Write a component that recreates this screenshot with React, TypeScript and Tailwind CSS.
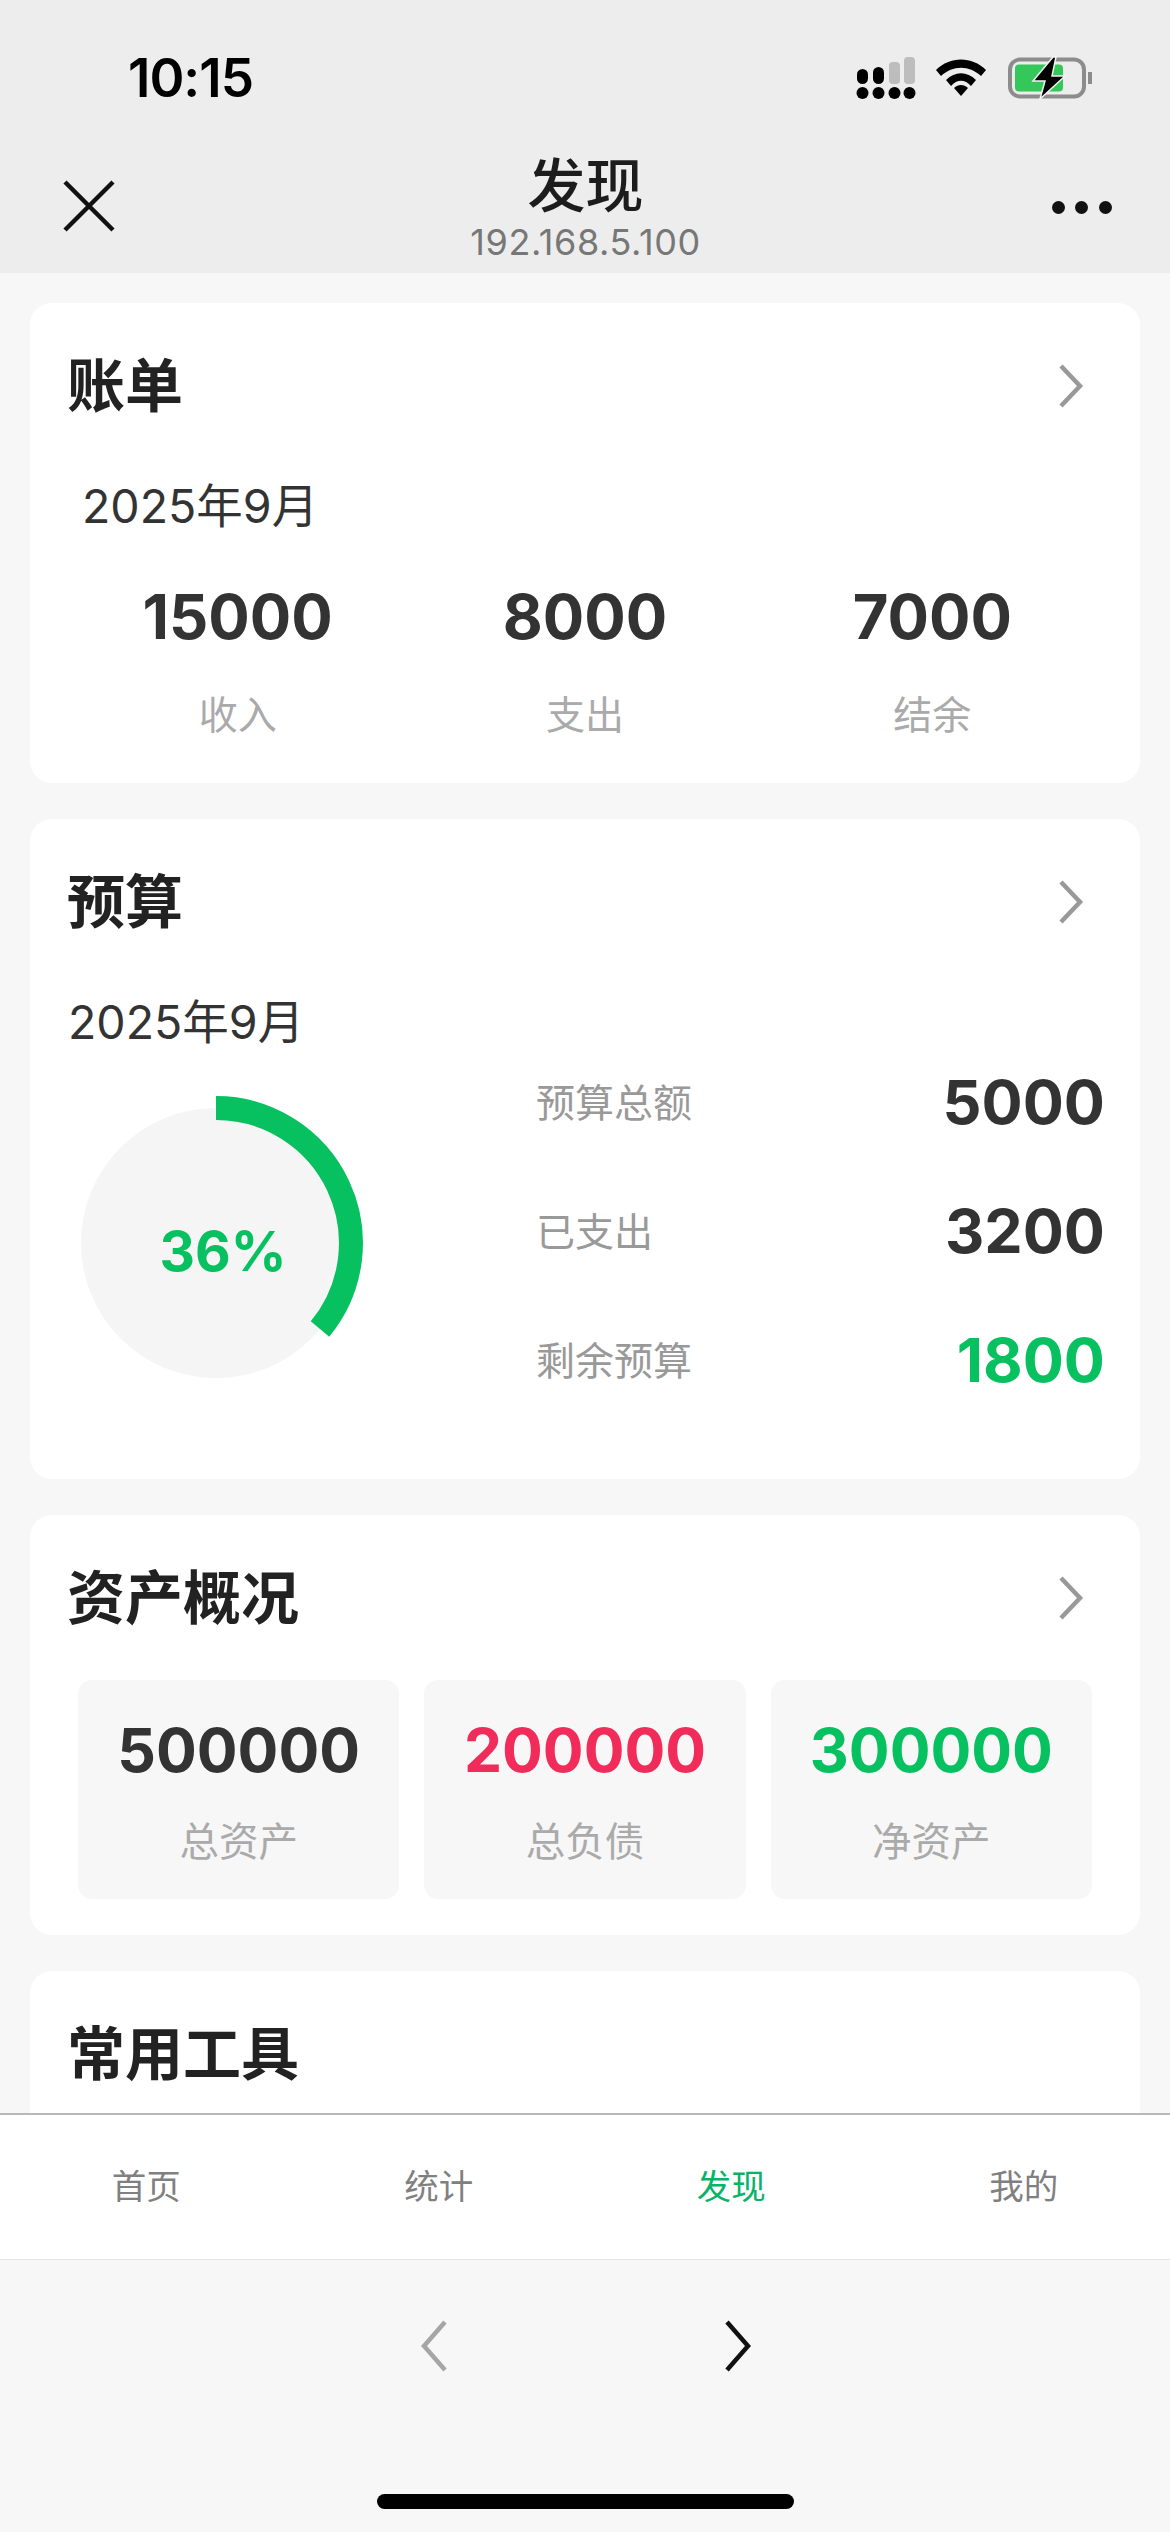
import React from "react";

function Chevron({ className = "text-[#999999]" }: { className?: string }) {
  return (
    <svg width="26" height="46" viewBox="0 0 26 46" fill="none" className={className}>
      <path d="M3 3 L22 23 L3 43" stroke="currentColor" strokeWidth="4.5" />
    </svg>
  );
}

function CardHeader({ title, chevron = true }: { title: string; chevron?: boolean }) {
  return (
    <div className="flex h-[80px] items-center justify-between pl-[37px] pr-[56px]">
      <span className="text-[58px] leading-[80px] font-bold text-[#222222]">{title}</span>
      {chevron && <Chevron />}
    </div>
  );
}

function Signal() {
  return (
    <svg width="60" height="42" viewBox="0 0 60 42">
      <rect x="1" y="12" width="11" height="15" rx="5.5" fill="#000" />
      <rect x="17" y="10" width="11" height="17" rx="5.5" fill="#000" />
      <rect x="33" y="5" width="11" height="22" rx="4" fill="#bdbdbd" />
      <rect x="48" y="0" width="11" height="27" rx="4" fill="#bdbdbd" />
      <circle cx="6.5" cy="36" r="6" fill="#000" />
      <circle cx="22.5" cy="36" r="6" fill="#000" />
      <circle cx="38.5" cy="36" r="6" fill="#000" />
      <circle cx="53.5" cy="36" r="6" fill="#000" />
    </svg>
  );
}

function Wifi() {
  return (
    <svg width="50" height="38" viewBox="0 0 50 38">
      <path d="M0 11 C14 -3 36 -3 50 11 L45 17 C33 6 17 6 5 17 Z" fill="#000" />
      <path d="M10 21 C19 12 31 12 40 21 L35 27 C29 20 21 20 15 27 Z" fill="#000" />
      <path d="M18 29 C22 25 28 25 32 29 L25 37 Z" fill="#000" />
    </svg>
  );
}

function Battery() {
  return (
    <svg width="86" height="44" viewBox="0 0 86 44">
      <rect x="4" y="3.5" width="74" height="37" rx="10" fill="none" stroke="#8c8c8c" strokeWidth="4" />
      <path d="M86 16 C87 19 87 25 86 28 L82 28 L82 16 Z" fill="#8c8c8c" />
      <rect x="9" y="8.5" width="48" height="27" rx="4" fill="#34c759" />
      <path d="M47 1 L27 25 L39 25 L34 43 L59 20 L46 20 L50 1 Z" fill="#000" stroke="#f2f2f2" strokeWidth="1.5" />
    </svg>
  );
}

function BudgetRow({ label, value, green }: { label: string; value: string; green?: boolean }) {
  return (
    <div className="flex h-[102px] items-center justify-between">
      <span className="text-[39px] text-[#999999]">{label}</span>
      <span className={`text-[61px] font-bold ${green ? "text-[#07c160]" : "text-[#333333]"}`}>{value}</span>
    </div>
  );
}

function AssetBox({ value, label, color }: { value: string; label: string; color: string }) {
  return (
    <div className="flex h-[219px] flex-col items-center rounded-[14px] bg-[#f7f7f7] pt-[34px]">
      <span className={`text-[60.5px] leading-[72px] font-bold ${color}`}>{value}</span>
      <span className="mt-[31px] text-[39.5px] leading-[50px] text-[#aaaaaa]">{label}</span>
    </div>
  );
}

export default function App() {
  const tabs = ["首页", "统计", "发现", "我的"];
  return (
    <div className="flex h-[2532px] w-[1170px] flex-col overflow-hidden bg-[#f7f7f7] font-['Inter','Noto_Sans_CJK_SC',sans-serif]">
      {/* Status + nav */}
      <div className="h-[273px] shrink-0 bg-[#ededed]">
        <div className="flex h-[150px] items-start justify-between pt-[50px] pl-[128px] pr-[78px]">
          <span className="text-[53px] leading-[56px] font-semibold tracking-[-1px] text-black">10:15</span>
          <div className="flex items-center gap-[20px] pt-[6px]">
            <Signal />
            <Wifi />
            <Battery />
          </div>
        </div>
        <div className="flex items-start justify-between pl-[62px] pr-[58px]">
          <div className="w-[60px]">
            <svg width="54" height="54" viewBox="0 0 54 54" className="mt-[29px]">
              <path d="M3 3 L51 51 M51 3 L3 51" stroke="#111" strokeWidth="4.5" fill="none" />
            </svg>
          </div>
          <div className="flex flex-col items-center pr-[3px]">
            <span className="text-[58px] leading-[72px] font-medium text-[#1c1c1c]">发现</span>
            <span className="-mt-[2px] text-[36px] leading-[44px] tracking-[0.6px] text-[#777777]">192.168.5.100</span>
          </div>
          <div className="mt-[51px] flex w-[60px] justify-between">
            <span className="h-[13px] w-[13px] rounded-full bg-[#111]" />
            <span className="h-[13px] w-[13px] rounded-full bg-[#111]" />
            <span className="h-[13px] w-[13px] rounded-full bg-[#111]" />
          </div>
        </div>
      </div>

      {/* Content */}
      <div className="flex min-h-0 flex-1 flex-col gap-[36px] overflow-hidden px-[30px] pt-[30px]">
        <section className="shrink-0 rounded-[22px] bg-white pt-[43px] pb-[43px]">
          <CardHeader title="账单" />
          <div className="mt-[50px] mb-[-1px] ml-[52px] text-[46.5px] leading-[60px] text-[#333333]">2025年9月</div>
          <div className="mt-[45px] grid grid-cols-3 px-[34px]">
            {[
              ["15000", "收入"],
              ["8000", "支出"],
              ["7000", "结余"],
            ].map(([v, l]) => (
              <div key={l} className="flex flex-col items-center">
                <span className="mt-[1px] mb-[-1px] text-[61.5px] leading-[72px] font-bold text-[#333333]">{v}</span>
                <span className="mt-[38px] text-[39px] leading-[50px] text-[#aaaaaa]">{l}</span>
              </div>
            ))}
          </div>
        </section>

        <section className="shrink-0 rounded-[22px] bg-white pt-[43px] pb-[67px]">
          <CardHeader title="预算" />
          <div className="mt-[50px] mb-[-1px] ml-[38px] text-[46.5px] leading-[60px] text-[#333333]">2025年9月</div>
          <div className="flex pl-[38px] pr-[35px]">
            <div className="relative mt-[42px] h-[300px] w-[468px] shrink-0">
              <svg width="300" height="300" viewBox="0 0 300 300">
                <circle cx="148" cy="150" r="135" fill="#f5f5f5" />
                <path d="M148 15 A135 135 0 0 1 252 236" fill="none" stroke="#07c160" strokeWidth="24" />
              </svg>
              <span className="absolute top-[122px] left-[155px] w-[0px] whitespace-nowrap">
                <span className="block w-fit -translate-x-1/2 text-[55px] leading-[72px] font-bold text-[#07c160]">36%</span>
              </span>
            </div>
            <div className="flex flex-1 flex-col gap-[27px] pt-[1px]">
              <BudgetRow label="预算总额" value="5000" />
              <BudgetRow label="已支出" value="3200" />
              <BudgetRow label="剩余预算" value="1800" green />
            </div>
          </div>
        </section>

        <section className="shrink-0 rounded-[22px] bg-white pt-[43px] pb-[36px]">
          <CardHeader title="资产概况" />
          <div className="mt-[42px] grid grid-cols-3 gap-[25px] pl-[48px] pr-[48px]">
            <AssetBox value="500000" label="总资产" color="text-[#333333]" />
            <AssetBox value="200000" label="总负债" color="text-[#f22c5a]" />
            <AssetBox value="300000" label="净资产" color="text-[#07c160]" />
          </div>
        </section>

        <section className="min-h-[300px] shrink-0 rounded-[22px] bg-white pt-[43px]">
          <CardHeader title="常用工具" chevron={false} />
        </section>
      </div>

      {/* Tab bar */}
      <nav className="grid h-[147px] shrink-0 grid-cols-4 items-center border-t-2 border-b border-t-[#b8b8b8] border-b-[#e6e6e6] bg-white">
        {tabs.map((t) => (
          <span
            key={t}
            className={`text-center text-[34.5px] ${t === "发现" ? "text-[#07b368]" : "text-[#808080]"}`}
          >
            {t}
          </span>
        ))}
      </nav>

      {/* Browser toolbar */}
      <div className="flex h-[272px] shrink-0 flex-col items-center bg-[#f7f7f7]">
        <div className="mt-[60px] flex gap-[276px] pl-[2px]">
          <svg width="28" height="52" viewBox="0 0 28 52" fill="none">
            <path d="M25 2 L4 26 L25 50" stroke="#a6a6a6" strokeWidth="4.5" />
          </svg>
          <svg width="28" height="52" viewBox="0 0 28 52" fill="none">
            <path d="M3 2 L24 26 L3 50" stroke="#111" strokeWidth="4.5" />
          </svg>
        </div>
        <div className="mt-[122px] h-[15px] w-[417px] rounded-[8px] bg-black" />
      </div>
    </div>
  );
}
